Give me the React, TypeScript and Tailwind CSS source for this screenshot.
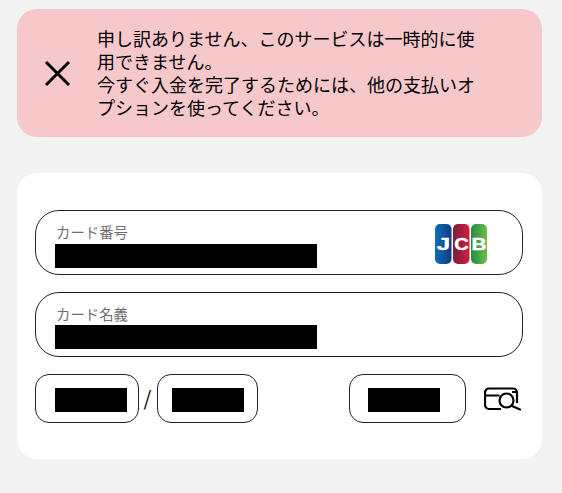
import type { ReactNode } from "react";

function JcbLogo() {
  return (
    <svg width="52" height="40" viewBox="0 0 52 40" className="mt-[2px] block shrink-0">
      <defs>
        <linearGradient id="jcb-blue" x1="0" x2="1" y1="0" y2="0">
          <stop offset="0" stopColor="#0d6fb8" />
          <stop offset="1" stopColor="#123a86" />
        </linearGradient>
        <linearGradient id="jcb-red" x1="0" x2="1" y1="0" y2="0">
          <stop offset="0" stopColor="#7c1d3f" />
          <stop offset="1" stopColor="#d01f3c" />
        </linearGradient>
        <linearGradient id="jcb-green" x1="0" x2="1" y1="0" y2="0">
          <stop offset="0" stopColor="#1d8f45" />
          <stop offset="1" stopColor="#74b94a" />
        </linearGradient>
      </defs>
      <rect x="0" y="0" width="16.500" height="40" rx="5" fill="url(#jcb-blue)" />
      <rect x="18" y="0" width="16.500" height="40" rx="5" fill="url(#jcb-red)" />
      <rect x="36" y="0" width="16" height="40" rx="5" fill="url(#jcb-green)" />
      <g fill="#fff" stroke="#fff" strokeWidth="0.4" fontFamily="Liberation Sans" fontWeight="700" fontSize="16" textAnchor="middle">
        <text transform="translate(8.500 26) scale(1.5 1)">J</text>
        <text transform="translate(26.500 26) scale(1.25 1)">C</text>
        <text transform="translate(44 26) scale(1.3 1)">B</text>
      </g>
    </svg>
  );
}

function CvvIcon() {
  return (
    <svg width="38" height="26" viewBox="0 0 38 26" fill="none" stroke="#000" className="block shrink-0">
      <path
        d="M17 23H5a4 4 0 0 1-4-4V6.500a4 4 0 0 1 4-4h24a4 4 0 0 1 4 4V17"
        strokeWidth="2.200"
      />
      <path d="M1.500 9.500h14M28 6h4" strokeWidth="2" />
      <circle cx="22.500" cy="14.500" r="7" strokeWidth="2.200" />
      <path d="M28 20l8 3.500" strokeWidth="2.200" strokeLinecap="round" />
    </svg>
  );
}

function Redacted({ className }: { className: string }) {
  return <div className={`h-6 bg-black ${className}`} />;
}

function LabeledField({ label, barGap, children }: { label: string; barGap: string; children?: ReactNode }) {
  return (
    <div className="flex h-[65px] items-start justify-between rounded-[24px] border border-[#222] pl-[19px] pr-[35px] pt-[11px]">
      <div>
        <div className="pl-px text-[14.400px] leading-[20px] text-[#6f6f6f]">{label}</div>
        <Redacted className={`w-[262px] ${barGap}`} />
      </div>
      {children}
    </div>
  );
}

function SmallField({ width, pad }: { width: string; pad: string }) {
  return (
    <div className={`flex h-[49px] items-center rounded-[14px] border border-[#222] pt-[3px] ${width} ${pad}`}>
      <Redacted className="w-[72px]" />
    </div>
  );
}

export default function App() {
  return (
    <div
      className="h-[493px] w-[562px] overflow-hidden bg-[#f3f3f3] pl-[17px] pr-5 pt-[9px]"
      style={{ fontFamily: '"Noto Sans CJK JP", "Liberation Sans", sans-serif' }}
    >
      <div className="flex h-[128px] items-center rounded-[20px] bg-[#f7c8ca] pl-[26px]">
        <svg width="28" height="28" viewBox="0 0 28 28" className="block shrink-0">
          <path d="M3 3l23 23M26 3L3 26" stroke="#000" strokeWidth="3" />
        </svg>
        <p className="ml-[27px] w-[384px] -translate-x-px text-lg leading-[23px] text-black">
          申し訳ありません、このサービスは一時的に使用できません。
          <br />
          今すぐ入金を完了するためには、他の支払いオプションを使ってください。
        </p>
      </div>

      <div className="mt-9 flex h-[286px] flex-col gap-[17px] rounded-[20px] bg-white px-[18px] pb-9 pt-[37px]">
        <div className="w-[488px]">
          <LabeledField label="カード番号" barGap="mt-[2px]">
            <JcbLogo />
          </LabeledField>
        </div>
        <div className="w-[488px]">
          <LabeledField label="カード名義" barGap="mt-px" />
        </div>
        <div className="flex items-center">
          <SmallField width="w-[104px]" pad="pl-[19px]" />
          <span className="w-[18px] pb-[2px] pr-px text-center text-xl leading-none text-black">/</span>
          <SmallField width="w-[101px]" pad="pl-[14px]" />
          <div className="ml-[91px]">
            <SmallField width="w-[117px]" pad="pl-[18px]" />
          </div>
          <div className="ml-[18px]">
            <CvvIcon />
          </div>
        </div>
      </div>
    </div>
  );
}
